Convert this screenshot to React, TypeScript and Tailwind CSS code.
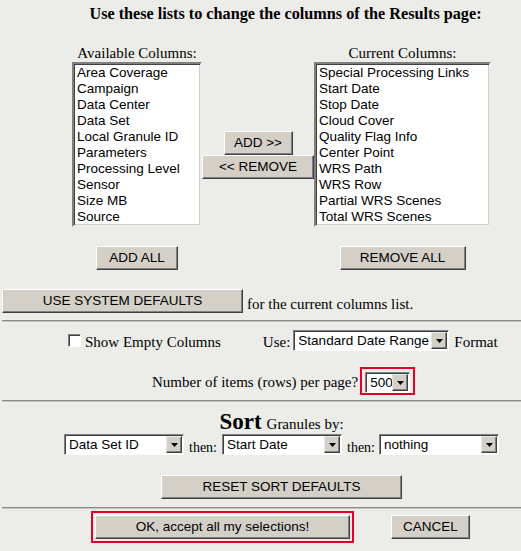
import React from 'react';

const serif = 'font-["Liberation_Serif",serif]';
const sans = 'font-["Liberation_Sans",Arial,sans-serif]';

const available = ['Area Coverage', 'Campaign', 'Data Center', 'Data Set', 'Local Granule ID', 'Parameters', 'Processing Level', 'Sensor', 'Size MB', 'Source'];
const current = ['Special Processing Links', 'Start Date', 'Stop Date', 'Cloud Cover', 'Quality Flag Info', 'Center Point', 'WRS Path', 'WRS Row', 'Partial WRS Scenes', 'Total WRS Scenes'];

function Btn({ className = '', children }: { className?: string; children: React.ReactNode }) {
  return (
    <div className={`h-[24px] flex items-center justify-center bg-[#d4d0c8] border border-t-white border-l-white border-b-[#404040] border-r-[#404040] shadow-[inset_-1px_-1px_0_#808080] text-[13.5px] text-black leading-none ${sans} ${className}`}>
      {children}
    </div>
  );
}

function ListBox({ items, className = '' }: { items: string[]; className?: string }) {
  return (
    <div className={`h-[165px] bg-white border-2 border-t-[#808080] border-l-[#808080] border-b-[#ececec] border-r-[#ececec] shadow-[inset_1px_1px_0_#404040,inset_-1px_-1px_0_#d4d0c8] pt-[1px] pl-[3px] ${className}`}>
      {items.map(t => (
        <div key={t} className={`h-[16px] leading-[16px] text-[13.5px] text-black whitespace-nowrap ${sans}`}>{t}</div>
      ))}
    </div>
  );
}

function Select({ value, className = '' }: { value: string; className?: string }) {
  return (
    <div className={`h-[21px] flex bg-white border border-t-[#808080] border-l-[#808080] border-b-white border-r-white shadow-[inset_1px_1px_0_#404040] ${className}`}>
      <div className={`flex-1 pl-[4px] pt-[1px] text-[13.5px] leading-[18px] text-black whitespace-nowrap overflow-hidden ${sans}`}>{value}</div>
      <div className="w-[16px] my-[1px] mr-[1px] flex items-center justify-center bg-[#d4d0c8] border border-t-[#e8e8e8] border-l-[#e8e8e8] border-b-[#404040] border-r-[#404040] shadow-[inset_-1px_-1px_0_#808080]">
        <svg width="7" height="4" viewBox="0 0 7 4"><path d="M0 0h7L3.5 4z" fill="#000" /></svg>
      </div>
    </div>
  );
}

function Hr() {
  return <div className="ml-[2px] h-[2px] border-t border-t-[#8a8a8a] border-b border-b-[#c4c4c0]" />;
}

export default function App() {
  return (
    <div className={`w-[521px] h-[551px] bg-[#ececE9] text-black overflow-hidden ${serif}`}>
      {/* Heading */}
      <div className="pt-[6px] pl-[50px] text-center text-[16.2px] font-bold leading-[16px]">
        Use these lists to change the columns of the Results page:
      </div>

      {/* Column lists */}
      <div className="flex mt-[22px] pl-[72px]">
        <div className="w-[130px] flex flex-col">
          <div className="h-[18px] text-center text-[15px] leading-[18px]">Available Columns:</div>
          <ListBox items={available} />
          <div className="flex justify-center mt-[19px]">
            <Btn className="w-[82px]">ADD ALL</Btn>
          </div>
        </div>
        <div className="w-[112px] flex flex-col items-center pt-[87px]">
          <Btn className="w-[69px]">ADD &gt;&gt;</Btn>
          <Btn className="w-[112px]">&lt;&lt; REMOVE</Btn>
        </div>
        <div className="w-[177px] flex flex-col">
          <div className="h-[18px] text-center text-[15px] leading-[18px]">Current Columns:</div>
          <ListBox items={current} />
          <div className="flex justify-center mt-[19px]">
            <Btn className="w-[126px]">REMOVE ALL</Btn>
          </div>
        </div>
      </div>

      {/* System defaults */}
      <div className="flex items-center mt-[19px] pl-[2px]">
        <Btn className="w-[241px]">USE SYSTEM DEFAULTS</Btn>
        <span className="ml-[4px] text-[15px] leading-[18px] pt-[6px]">for the current columns list.</span>
      </div>

      <div className="mt-[7px]"><Hr /></div>

      {/* Options */}
      <div className="flex items-center mt-[8px] pl-[68px] h-[21px]">
        <div className="w-[13px] h-[13px] bg-white border border-t-[#808080] border-l-[#808080] border-b-white border-r-white shadow-[inset_1px_1px_0_#404040]" />
        <span className="ml-[4px] text-[15px] leading-[18px] pt-[2px]">Show Empty Columns</span>
        <span className="ml-[42px] text-[15px] leading-[18px] pt-[2px]">Use:</span>
        <Select value="Standard Date Range" className="ml-[3px] w-[156px]" />
        <span className="ml-[5px] text-[15px] leading-[18px] pt-[2px]">Format</span>
      </div>

      <div className="flex items-center mt-[16px] pl-[152px]">
        <span className="text-[15px] leading-[18px] pt-[2px]">Number of items (rows) per page?</span>
        <div className="ml-[2px] border-2 border-[#e4002b] p-[3px] pt-[3px] pb-[0px]">
          <Select value="500" className="w-[45px] mb-[0px]" />
        </div>
      </div>

      <div className="mt-[5px]"><Hr /></div>

      {/* Sort */}
      <div className="mt-[9px] flex items-baseline justify-center pl-[42px]">
        <span className="text-[23px] font-bold leading-[22px]">Sort</span>
        <span className="ml-[5px] text-[15px] leading-[18px]">Granules by:</span>
      </div>
      <div className="flex items-center mt-[-1px] pl-[64px]">
        <Select value="Data Set ID" className="w-[120px]" />
        <span className="ml-[5px] text-[14px] leading-[18px] pt-[7px]">then:</span>
        <Select value="Start Date" className="ml-[5px] w-[120px]" />
        <span className="ml-[5px] text-[14px] leading-[18px] pt-[7px]">then:</span>
        <Select value="nothing" className="ml-[4px] w-[120px]" />
      </div>

      <div className="flex mt-[18px] pl-[161px]">
        <Btn className="w-[241px]">RESET SORT DEFAULTS</Btn>
      </div>

      <div className="mt-[8px]"><Hr /></div>

      {/* Final actions */}
      <div className="flex items-start mt-[2px] pl-[91px]">
        <div className="border-2 border-[#e4002b] p-[2px]">
          <Btn className="w-[255px]">OK, accept all my selections!</Btn>
        </div>
        <Btn className="ml-[37px] mt-[4px] w-[79px]">CANCEL</Btn>
      </div>
    </div>
  );
}
